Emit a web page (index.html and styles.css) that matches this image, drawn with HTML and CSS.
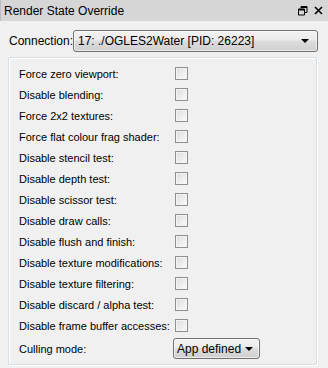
FILE: index.html
```html
<!DOCTYPE html>
<html lang="en">
<head>
    <meta charset="UTF-8">
    <title>Render State Override</title>
    <link rel="stylesheet" href="styles.css">
</head>
<body>
    <div class="titlebar">
        <span class="title">Render State Override</span>
        <span class="title-buttons">
            <svg width="10" height="10" viewBox="0 0 10 10">
                <path d="M3 0.5h6v6h-2M3 0.5v2M0.5 3h6v6h-6z M0.5 3.5h6" fill="none" stroke="#000" stroke-width="1"/>
                <path d="M3 1.5h6M0.5 4h6" stroke="#000" stroke-width="1"/>
            </svg>
            <svg width="9" height="9" viewBox="0 0 9 9">
                <path d="M1 1l7 7M8 1l-7 7" stroke="#000" stroke-width="1.6"/>
            </svg>
        </span>
    </div>

    <div class="connection">
        <span class="conn-label">Connection:</span>
        <div class="combo combo-wide">
            <span>17: ./OGLES2Water [PID: 26223]</span>
            <span class="arrow"></span>
        </div>
    </div>

    <div class="group">
        <div class="row"><span class="label">Force zero viewport:</span><span class="check"></span></div>
        <div class="row"><span class="label">Disable blending:</span><span class="check"></span></div>
        <div class="row"><span class="label">Force 2x2 textures:</span><span class="check"></span></div>
        <div class="row"><span class="label">Force flat colour frag shader:</span><span class="check"></span></div>
        <div class="row"><span class="label">Disable stencil test:</span><span class="check"></span></div>
        <div class="row"><span class="label">Disable depth test:</span><span class="check"></span></div>
        <div class="row"><span class="label">Disable scissor test:</span><span class="check"></span></div>
        <div class="row"><span class="label">Disable draw calls:</span><span class="check"></span></div>
        <div class="row"><span class="label">Disable flush and finish:</span><span class="check"></span></div>
        <div class="row"><span class="label">Disable texture modifications:</span><span class="check"></span></div>
        <div class="row"><span class="label">Disable texture filtering:</span><span class="check"></span></div>
        <div class="row"><span class="label">Disable discard / alpha test:</span><span class="check"></span></div>
        <div class="row"><span class="label">Disable frame buffer accesses:</span><span class="check"></span></div>
        <div class="row row-culling">
            <span class="label">Culling mode:</span>
            <div class="combo combo-small">
                <span>App defined</span>
                <span class="arrow"></span>
            </div>
        </div>
    </div>
</body>
</html>
```
FILE: styles.css
```css
* {
    margin: 0;
    padding: 0;
    box-sizing: border-box;
}

body {
    width: 328px;
    height: 368px;
    overflow: hidden;
    background: #f0f0f0;
    font-family: 'Liberation Sans', Arial, sans-serif;
    font-size: 11px;
    color: #000;
}

.titlebar {
    height: 21px;
    background: #d6d6d6;
    border-left: 1px solid #bdbdbd;
    display: flex;
    align-items: center;
    justify-content: space-between;
    padding: 0 5px 0 3px;
    font-size: 12px;
}

.title-buttons {
    display: flex;
    align-items: center;
    gap: 6px;
}

.title-buttons svg {
    display: block;
}

.connection {
    display: flex;
    align-items: center;
    padding: 9px 10px 0 9px;
    font-size: 12px;
}

.conn-label {
    width: 64px;
}

.combo {
    display: flex;
    align-items: center;
    justify-content: space-between;
    border: 1px solid #707070;
    border-radius: 3px;
    background: linear-gradient(#f2f2f2 0%, #ebebeb 45%, #dddddd 50%, #cfcfcf 100%);
    box-shadow: inset 0 0 0 1px rgba(255, 255, 255, 0.6);
    padding: 0 8px 0 4px;
    white-space: nowrap;
}

.combo-wide {
    width: 245px;
    height: 22px;
}

.combo-small {
    width: 87px;
    height: 21px;
    padding: 0 6px 0 3px;
    font-size: 12px;
}

.arrow {
    width: 0;
    height: 0;
    border-left: 4px solid transparent;
    border-right: 4px solid transparent;
    border-top: 4px solid #000;
}

.group {
    margin: 5px 11px 0 8px;
    height: 308px;
    border: 1px solid #d5dfe5;
    box-shadow: inset 1px 1px 0 #fff, 1px 1px 0 #fff;
    border-radius: 2px;
    padding: 5px 0 0 10px;
}

.row {
    display: flex;
    align-items: center;
    height: 21px;
}

.label {
    width: 156px;
    white-space: nowrap;
}

.check {
    width: 13px;
    height: 13px;
    border: 1px solid #8e8f8f;
    background: linear-gradient(135deg, #dcdcdc 0%, #f2f2f2 70%, #ffffff 100%);
    box-shadow: inset 0 0 0 1px #f4f4f4;
}

.row-culling {
    height: 23px;
    margin-top: 1px;
}

.row-culling .label {
    width: 154px;
}
```
